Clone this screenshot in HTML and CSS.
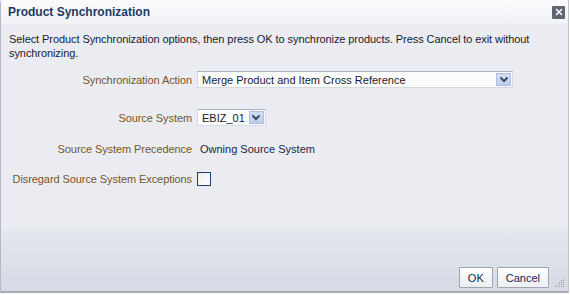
FILE: index.html
```html
<!DOCTYPE html>
<html lang="en">
<head>
    <meta charset="UTF-8">
    <title>Product Synchronization</title>
    <link rel="stylesheet" href="styles.css">
</head>
<body>
    <div class="dialog">
        <div class="dialog-title">
            <span class="title-text">Product Synchronization</span>
            <span class="close-btn" title="Close">
                <svg width="8" height="8" viewBox="0 0 8 8"><path d="M1 1 L7 7 M7 1 L1 7" stroke="#fff" stroke-width="1.6"/></svg>
            </span>
        </div>
        <div class="dialog-body">
            <p class="intro">Select Product Synchronization options, then press OK to synchronize products. Press Cancel to exit without synchronizing.</p>
            <div class="form">
                <label class="form-label row-action">Synchronization Action</label>
                <div class="form-field row-action">
                    <div class="select select-wide">
                        <span class="select-value">Merge Product and Item Cross Reference</span>
                        <span class="select-btn"><svg width="10" height="7" viewBox="0 0 10 7"><path d="M1.5 1.5 L5 5 L8.5 1.5" stroke="#3b4b66" stroke-width="2" fill="none"/></svg></span>
                    </div>
                </div>

                <label class="form-label row-source">Source System</label>
                <div class="form-field row-source">
                    <div class="select">
                        <span class="select-value">EBIZ_01</span>
                        <span class="select-btn"><svg width="10" height="7" viewBox="0 0 10 7"><path d="M1.5 1.5 L5 5 L8.5 1.5" stroke="#3b4b66" stroke-width="2" fill="none"/></svg></span>
                    </div>
                </div>

                <label class="form-label row-prec">Source System Precedence</label>
                <div class="form-field row-prec"><span class="value-text">Owning Source System</span></div>

                <label class="form-label row-check">Disregard Source System Exceptions</label>
                <div class="form-field row-check"><span class="checkbox"></span></div>
            </div>
        </div>
        <div class="dialog-footer">
            <button class="btn">OK</button>
            <button class="btn">Cancel</button>
            <span class="grip">
                <svg width="11" height="11" viewBox="0 0 11 11" fill="#9aa1ad">
                    <rect x="9" y="1" width="1" height="1"/>
                    <rect x="7" y="3" width="1" height="1"/><rect x="9" y="3" width="1" height="1"/>
                    <rect x="5" y="5" width="1" height="1"/><rect x="7" y="5" width="1" height="1"/><rect x="9" y="5" width="1" height="1"/>
                    <rect x="3" y="7" width="1" height="1"/><rect x="5" y="7" width="1" height="1"/><rect x="7" y="7" width="1" height="1"/><rect x="9" y="7" width="1" height="1"/>
                    <rect x="1" y="9" width="1" height="1"/><rect x="3" y="9" width="1" height="1"/><rect x="5" y="9" width="1" height="1"/><rect x="7" y="9" width="1" height="1"/><rect x="9" y="9" width="1" height="1"/>
                </svg>
            </span>
        </div>
    </div>
</body>
</html>
```

FILE: styles.css
```css
body {
    margin: 0;
    font-family: "Liberation Sans", Arial, sans-serif;
    font-size: 11px;
    background-color: #fff;
}
.dialog {
    width: 569px;
    height: 293px;
    box-sizing: border-box;
    display: flex;
    flex-direction: column;
    background-color: #ebecf1;
    border-left: 1px solid #b4b8c8;
    border-right: 1px solid #c2c5cd;
    border-bottom: 2px solid #a9adb8;
    border-top-left-radius: 3px;
}
.dialog-title {
    height: 24px;
    display: flex;
    align-items: center;
    justify-content: space-between;
    padding: 0 3px 0 7px;
    background: linear-gradient(#fbfbfd, #f1f2f6);
    border-top-left-radius: 3px;
}
.title-text {
    font-weight: bold;
    font-size: 12px;
    color: #1b3a63;
}
.close-btn {
    width: 13px;
    height: 13px;
    background-color: #5d6573;
    border-radius: 1px;
    display: flex;
    align-items: center;
    justify-content: center;
}
.dialog-body {
    flex: 1;
    padding: 0 8px;
}
.intro {
    margin: 8px 0 0;
    line-height: 14px;
    letter-spacing: -0.08px;
    color: #1a1a2e;
}
.form {
    display: grid;
    grid-template-columns: 183px auto;
    column-gap: 5px;
    align-items: center;
    margin-top: 10px;
}
.form-label {
    display: flex;
    align-items: center;
    justify-content: flex-end;
    text-align: right;
    color: #76562a;
    letter-spacing: -0.08px;
}
.form-field {
    display: flex;
    align-items: center;
}
.row-action { height: 19px; }
.row-source { height: 19px; margin-top: 19px; }
.row-prec { height: 18px; margin-top: 13px; }
.row-check { height: 18px; margin-top: 12px; }
.select {
    display: flex;
    align-items: center;
    height: 17px;
    box-sizing: border-box;
    background-color: #fbfdfd;
    border: 1px solid #d7dbe1;
    border-top-color: #a9b0ba;
    padding: 0 1px 0 4px;
    color: #1a1a2e;
}
.select-wide {
    width: 316px;
}
.select-value {
    flex: 1;
    margin-right: 4px;
}
.select-btn {
    width: 15px;
    height: 13px;
    box-sizing: border-box;
    background: linear-gradient(#d3dff3, #bccde9);
    border: 1px solid #aebfe0;
    display: flex;
    align-items: center;
    justify-content: center;
}
.value-text {
    padding-left: 3px;
    color: #1f2440;
}
.checkbox {
    width: 12px;
    height: 12px;
    border: 1px solid #1e3f6c;
    background: linear-gradient(135deg, #ececec, #ffffff);
}
.dialog-footer {
    height: 64px;
    box-sizing: border-box;
    display: flex;
    align-items: flex-end;
    justify-content: flex-end;
    gap: 4px;
    padding: 0 3px 3px 0;
    background: linear-gradient(#ebecf1 0%, #e2e6ee 10%, #d5dae4 100%);
}
.btn {
    height: 21px;
    padding: 0 8px;
    font-family: "Liberation Sans", Arial, sans-serif;
    font-size: 11px;
    color: #0f2c58;
    background: linear-gradient(#ffffff, #eceef2);
    border: 1px solid #9ea5b0;
    border-radius: 1px;
}
.grip {
    width: 11px;
    height: 11px;
    margin-left: 1px;
}
```
